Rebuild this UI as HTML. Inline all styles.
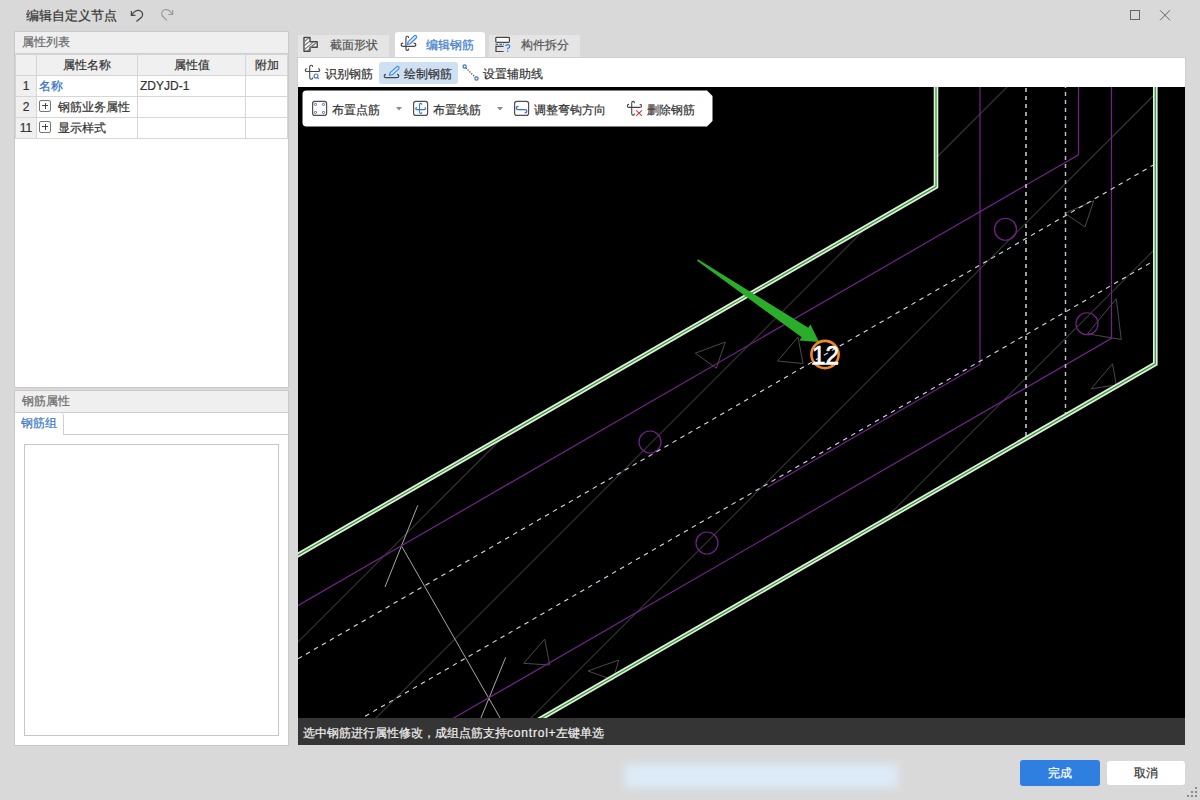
<!DOCTYPE html>
<html><head><meta charset="utf-8">
<style>
*{box-sizing:border-box;margin:0;padding:0}
html,body{width:1200px;height:800px;overflow:hidden;background:#d9d9d9;font-family:"Liberation Sans",sans-serif;font-size:12px;color:#333}
.a{position:absolute}
.t{white-space:nowrap;line-height:1}
.t,table.grid td,.phead{-webkit-text-stroke:0.2px currentColor}
#title{left:26px;top:9px;font-size:13px;color:#333}
/* left panels */
.panel{background:#fff;border:1px solid #c9c9c9}
.phead{background:#efefef;border-bottom:1px solid #cfcfcf;color:#6a6a6a;font-size:12px;padding-left:7px;line-height:21px;height:22px}
table.grid{border-collapse:collapse;position:absolute;left:0;top:22px;width:272px;table-layout:fixed}
table.grid td{border:1px solid #d6d6d6;height:21px;line-height:19px;font-size:12px;color:#333;padding:0 2px;white-space:nowrap;overflow:hidden}
table.grid tr.h td{background:#f0f0f0;text-align:center;color:#333}
table.grid td.n{background:#f0f0f0;text-align:center;padding:0}
.plus{display:inline-block;width:12px;height:12px;border:1px solid #777;border-radius:2px;position:relative;vertical-align:-1px;margin:0 7px 0 0}
.plus:before{content:"";position:absolute;left:2px;top:4.5px;width:6px;height:1px;background:#444}
.plus:after{content:"";position:absolute;left:4.5px;top:2px;width:1px;height:6px;background:#444}
.tab{background:#e5e5e5;color:#555;font-size:12px}
.tb{color:#333;font-size:12px}
</style></head><body>
<div class="a t" id="title">编辑自定义节点</div>
<svg class="a" style="left:125px;top:3px" width="55" height="25" viewBox="125 3 55 25">
<path d="M131.4 11 V15.4 H135.5 M132 14.8 C134 11.5 137 9.8 139.8 10.6 C142.5 11.5 143.4 14.6 141.8 17 L136.4 21.6" fill="none" stroke="#4a4a4a" stroke-width="1.3"/>
<path d="M172.7 10.1 V14.5 H168.3 M172.2 14 C170.2 10.5 167.5 8.9 164.6 9.8 C161.6 10.8 160.9 14 162.6 16.3 L167 20.4" fill="none" stroke="#9a9a9a" stroke-width="1.2"/>
</svg>
<div class="a" style="left:1130px;top:10px;width:10px;height:10px;border:1px solid #666"></div>
<svg class="a" style="left:1159px;top:9px" width="12" height="12" viewBox="0 0 12 12"><path d="M1 1.2 L11 11.3 M11 1.2 L1 11.3" stroke="#666" stroke-width="1"/></svg>

<!-- left panel 1 -->
<div class="a panel" style="left:14px;top:31px;width:275px;height:357px">
  <div class="phead">属性列表</div>
  <table class="grid">
    <colgroup><col style="width:21px"><col style="width:101px"><col style="width:108px"><col style="width:42px"></colgroup>
    <tr class="h"><td></td><td>属性名称</td><td>属性值</td><td>附加</td></tr>
    <tr><td class="n">1</td><td style="color:#2f6fc6">名称</td><td>ZDYJD-1</td><td></td></tr>
    <tr><td class="n">2</td><td><span class="plus"></span>钢筋业务属性</td><td></td><td></td></tr>
    <tr><td class="n">11</td><td><span class="plus"></span>显示样式</td><td></td><td></td></tr>
  </table>
</div>
<!-- left panel 2 -->
<div class="a panel" style="left:14px;top:390px;width:275px;height:356px">
  <div class="phead">钢筋属性</div>
  <div class="a" style="left:0;top:43px;width:273px;height:1px;background:#cfcfcf"></div>
  <div class="a t" style="left:0;top:22px;width:49px;height:22px;background:#fff;border-right:1px solid #cfcfcf;border-radius:0 3px 0 0;color:#3a78c3;font-size:12px;line-height:21px;padding-left:6px">钢筋组</div>
  <div class="a" style="left:9px;top:53px;width:255px;height:292px;border:1px solid #c6c6c6"></div>
</div>

<!-- right tabs -->
<div class="a tab t" style="left:298px;top:35px;width:91px;height:22px;line-height:21px;padding-left:32px">截面形状</div>
<div class="a t" style="left:395px;top:32px;width:90px;height:25px;background:#fff;border-radius:3px 3px 0 0;color:#3b7bc8;line-height:26px;padding-left:31px">编辑钢筋</div>
<div class="a tab t" style="left:489px;top:35px;width:91px;height:22px;line-height:21px;padding-left:32px">构件拆分</div>

<!-- toolbar -->
<div class="a" style="left:297px;top:57px;width:889px;height:31px;background:#fff;border:1px solid #cfcfcf;border-bottom:none"></div>
<div class="a" style="left:379px;top:62px;width:79px;height:22px;background:#cfe0f3;border-radius:3px"></div>
<div class="a t tb" style="left:325px;top:68px">识别钢筋</div>
<div class="a t tb" style="left:404px;top:68px">绘制钢筋</div>
<div class="a t tb" style="left:483px;top:68px">设置辅助线</div>

<!-- canvas -->
<div class="a" id="canvas" style="left:298px;top:87px;width:887px;height:631px;background:#000;overflow:hidden">
<!--SVG-->
<svg width="887" height="631" viewBox="298 87 887 631" style="position:absolute;left:0;top:0">
<line x1="290.0" y1="650.0" x2="504.0" y2="436.0" stroke="#383838" stroke-width="1.1" />
<line x1="364.0" y1="730.0" x2="868.3" y2="225.7" stroke="#383838" stroke-width="1.1" />
<line x1="936.0" y1="158.0" x2="1014.0" y2="80.0" stroke="#383838" stroke-width="1.1" />
<line x1="519.0" y1="730.0" x2="1155.0" y2="94.0" stroke="#383838" stroke-width="1.1" />
<line x1="883.0" y1="521.0" x2="1155.0" y2="249.0" stroke="#383838" stroke-width="1.1" />
<line x1="417.8" y1="505.3" x2="385.0" y2="586.9" stroke="#a8a8a8" stroke-width="1" />
<line x1="401.9" y1="546.6" x2="507.0" y2="730.0" stroke="#a8a8a8" stroke-width="1" />
<line x1="505.7" y1="657.3" x2="478.0" y2="725.0" stroke="#a8a8a8" stroke-width="1" />
<polygon points="1065,213.25 1093.75,200.75 1085,227" fill="none" stroke="#4a4a4a" stroke-width="1"/>
<polygon points="1116.25,298.75 1121.25,339.5 1087.5,333.75" fill="none" stroke="#4a4a4a" stroke-width="1"/>
<polygon points="1112.5,363.75 1116.25,385 1091.25,388.75" fill="none" stroke="#4a4a4a" stroke-width="1"/>
<polygon points="695.3,353.2 725.3,342 716.25,368.2" fill="none" stroke="#4a4a4a" stroke-width="1"/>
<polygon points="777.5,361 798,337 803,363.5" fill="none" stroke="#4a4a4a" stroke-width="1"/>
<polygon points="523.7,663.3 544.7,639 549.7,665" fill="none" stroke="#4a4a4a" stroke-width="1"/>
<polygon points="588,671 618.7,660 613,680" fill="none" stroke="#4a4a4a" stroke-width="1"/>
<polyline points="1078.5,80.0 1078.5,154.8 290.0,610.1" fill="none" stroke="#72228a" stroke-width="1.2" />
<polyline points="980.0,80.0 980.0,364.5 767.5,487.2" fill="none" stroke="#72228a" stroke-width="1.2" />
<polyline points="1111.5,80.0 1111.5,338.3 433.0,730.0" fill="none" stroke="#72228a" stroke-width="1.2" />
<circle cx="1005.5" cy="229.25" r="11" fill="none" stroke="#72228a" stroke-width="1.2"/>
<circle cx="1087" cy="323.75" r="11" fill="none" stroke="#72228a" stroke-width="1.2"/>
<circle cx="650" cy="442" r="11" fill="none" stroke="#72228a" stroke-width="1.2"/>
<circle cx="707" cy="543" r="11" fill="none" stroke="#72228a" stroke-width="1.2"/>
<line x1="290.0" y1="663.4" x2="1155.0" y2="164.0" stroke="#d4dae6" stroke-width="1.1" stroke-dasharray="4.6 4.6"/>
<line x1="341.2" y1="730.0" x2="1155.0" y2="260.2" stroke="#d4dae6" stroke-width="1.1" stroke-dasharray="4.6 4.6"/>
<line x1="1026.0" y1="80.0" x2="1026.0" y2="438.4" stroke="#b8bcc4" stroke-width="1.7" stroke-dasharray="4 4"/>
<line x1="1065.5" y1="84.0" x2="1065.5" y2="415.6" stroke="#b8bcc4" stroke-width="1.5" stroke-dasharray="4 4"/>
<polyline points="936.0,80.0 936.0,186.6 290.0,559.6" fill="none" stroke="#dcf3d8" stroke-width="4.6" stroke-linejoin="miter"/>
<polyline points="936.0,80.0 936.0,186.6 290.0,559.6" fill="none" stroke="#3f8f3f" stroke-width="1.2" stroke-linejoin="miter"/>
<polyline points="1155.3,80.0 1155.3,363.8 521.0,730.0" fill="none" stroke="#dcf3d8" stroke-width="4.6" stroke-linejoin="miter"/>
<polyline points="1155.3,80.0 1155.3,363.8 521.0,730.0" fill="none" stroke="#3f8f3f" stroke-width="1.2" stroke-linejoin="miter"/>
<polygon points="697.1,260.7 801.7,337.3 799.4,340.6 819.0,342.0 810.4,324.4 808.2,327.7 697.9,259.3" fill="#2aae2a"/>
<circle cx="825" cy="354.5" r="13.6" fill="none" stroke="#f08a22" stroke-width="2.6"/>
<text x="825.5" y="364.4" text-anchor="middle" font-family="Liberation Sans" font-size="26.5" fill="#fff" stroke="#fff" stroke-width="0.6" textLength="27" lengthAdjust="spacingAndGlyphs">12</text>
<line x1="812" y1="364" x2="838" y2="364" stroke="#fff" stroke-width="1.5"/>
</svg>
<!--/SVG-->
</div>

<!-- floating toolbar -->
<svg class="a" style="left:302px;top:90px" width="411" height="37" viewBox="0 0 411 37"><path d="M4.5 0.5 H405 L410.5 6 V31 L405 36.5 H4.5 Q0.5 36.5 0.5 32.5 V4.5 Q0.5 0.5 4.5 0.5 Z" fill="#fff"/></svg>
<div class="a t tb" style="left:332px;top:104px">布置点筋</div>
<div class="a t tb" style="left:433px;top:104px">布置线筋</div>
<div class="a t tb" style="left:534px;top:104px">调整弯钩方向</div>
<div class="a t tb" style="left:647px;top:104px">删除钢筋</div>
<svg class="a" style="left:396px;top:107px" width="7" height="4"><path d="M0 0H6L3 3.5Z" fill="#8a8a8a"/></svg>
<svg class="a" style="left:497px;top:107px" width="7" height="4"><path d="M0 0H6L3 3.5Z" fill="#8a8a8a"/></svg>

<!-- icons -->
<svg class="a" style="left:298px;top:30px" width="30" height="30" viewBox="298 30 30 30">
<path d="M304 37.5 H310 V41.8 H317.2 V47.2 H310 V51.2 H304 Z" fill="#fff" stroke="#474747" stroke-width="1.4" stroke-linejoin="round"/>
<path d="M304.5 41.5 L309 37.8 M304.5 45.5 L310 41 M304.5 49.5 L313 42.3 M307 50.8 L316.5 42.5 M310.5 47 L317 42.2" stroke="#777" stroke-width="1.1"/>
</svg>
<svg class="a" style="left:395px;top:30px" width="30" height="30" viewBox="395 30 30 30">
<path d="M408.7 38.1 Q408.7 36.2 407.3 36.2 Q405.9 36.2 405.9 38.1 V48.4 Q405.9 50.4 407.3 50.4 Q408.7 50.4 408.7 48.4 M403.3 43.1 Q401.2 43.1 401.2 44.7 Q401.2 46.3 403.3 46.3 H413.6 Q415.8 46.3 415.8 44.7 Q415.8 43.1 413.6 43.1" fill="none" stroke="#454545" stroke-width="1.15"/>
<path d="M407.4 44.4 L408.16 41.58 L414.2 35.82 Q415.25 34.9 416.3 35.9 Q417.2 36.9 416.3 37.98 L410.24 43.75 Z" fill="#d6e8fc" stroke="#3d86d8" stroke-width="1.1" stroke-linejoin="round"/>
</svg>
<svg class="a" style="left:488px;top:30px" width="30" height="30" viewBox="488 30 30 30">
<rect x="495.8" y="37.3" width="13.6" height="5" rx="0.8" fill="#fff" stroke="#454545" stroke-width="1.2"/>
<path d="M495.5 44.4 H498 M499.5 44.4 H502 M503 44.4 H503.8" stroke="#3d6fb0" stroke-width="1.1"/>
<path d="M503.6 46.4 H496 V51.5 H503.6" fill="none" stroke="#454545" stroke-width="1.2"/>
<path d="M505.8 46.2 Q506 44.6 507.8 44.6 Q509.7 44.6 509.7 46.3 Q509.7 47.5 508.3 48.1 Q507.6 48.5 507.6 49.6" fill="none" stroke="#3b82d6" stroke-width="1.3"/>
<circle cx="507.6" cy="51.3" r="0.75" fill="#3b82d6"/>
</svg>
<svg class="a" style="left:300px;top:60px" width="25" height="25" viewBox="300 60 25 25">
<path d="M312.7 67 Q312.7 65.3 311.2 65.3 Q309.7 65.3 309.7 67 V77.6 Q309.7 79.3 311.2 79.3 Q312.7 79.3 312.7 77.6 M307.2 68.8 Q305.2 68.8 305.2 70.2 Q305.2 71.5 307.2 71.5 H318 Q319.8 71.5 319.8 70.2 Q319.8 68.8 318 68.8" fill="none" stroke="#454545" stroke-width="1.1"/>
<circle cx="316" cy="76" r="2" fill="none" stroke="#3e73b8" stroke-width="1.1"/>
<path d="M317.3 77.3 L318.8 78.8" stroke="#3e73b8" stroke-width="1.1"/>
</svg>
<svg class="a" style="left:380px;top:62px" width="22" height="22" viewBox="380 62 22 22">
<path d="M386 74.33 Q384.17 74.33 384.17 76 Q384.17 77.67 386 77.67 H397 Q398.83 77.67 398.83 76 Q398.83 74.33 397 74.33" fill="none" stroke="#454545" stroke-width="1.15"/>
<path d="M389.33 75.33 L390.2 72.55 L396.68 66.87 Q397.7 66 398.66 66.9 Q399.5 68 398.66 69.13 L392.2 74.8 Z" fill="#d6e8fc" stroke="#3d86d8" stroke-width="1.1" stroke-linejoin="round"/>
</svg>
<svg class="a" style="left:460px;top:62px" width="22" height="22" viewBox="460 62 22 22">
<path d="M465.8 67.8 L475.2 77.2" stroke="#444" stroke-width="1.2" stroke-dasharray="1.3 1.3"/>
<circle cx="464.6" cy="66.5" r="1.6" fill="#fff" stroke="#3d73c0" stroke-width="1.2"/>
<circle cx="476.5" cy="78.5" r="1.6" fill="#fff" stroke="#3d73c0" stroke-width="1.2"/>
</svg>
<svg class="a" style="left:308px;top:96px" width="130" height="24" viewBox="308 96 130 24">
<rect x="312.6" y="101.4" width="14" height="14" rx="2.2" fill="none" stroke="#4f4f4f" stroke-width="1.2"/>
<circle cx="315.5" cy="104.4" r="1.1" fill="none" stroke="#5b68a8" stroke-width="1"/>
<circle cx="323.5" cy="104.4" r="1.1" fill="none" stroke="#5b68a8" stroke-width="1"/>
<circle cx="315.5" cy="112.4" r="1.1" fill="none" stroke="#5b68a8" stroke-width="1"/>
<circle cx="323.5" cy="112.4" r="1.1" fill="none" stroke="#5b68a8" stroke-width="1"/>
<rect x="413.6" y="101.4" width="14" height="14" rx="2.2" fill="none" stroke="#4f4f4f" stroke-width="1.2"/>
<path d="M421.8 104.8 Q421.8 103.4 420.6 103.4 Q419.5 103.4 419.5 104.8 V112 Q419.5 113.5 420.7 113.5 Q421.8 113.5 421.8 112.2 M417 107.6 Q415.7 107.6 415.7 108.6 Q415.7 109.6 417 109.6 H424.3 Q425.6 109.6 425.6 108.6 Q425.6 107.6 424.6 107.6" fill="none" stroke="#3a78c8" stroke-width="1.1"/>
</svg>
<svg class="a" style="left:510px;top:96px" width="140" height="24" viewBox="510 96 140 24">
<rect x="514.6" y="101.4" width="14" height="14" rx="2.2" fill="none" stroke="#4f4f4f" stroke-width="1.2"/>
<path d="M518.6 106.4 Q516.2 106.4 516.2 108 Q516.2 109.7 518 109.7 H524.8 Q526.8 109.7 526.8 111.2 Q526.8 112.8 524.6 112.8" fill="none" stroke="#3a6cb8" stroke-width="1.2"/>
<path d="M634.5 103.2 Q634.5 101.4 633.1 101.4 Q631.7 101.4 631.7 103.2 V113.4 Q631.7 115.1 633.1 115.1 Q634.5 115.1 634.5 113.4 M629 104.4 Q627.3 104.4 627.3 105.9 Q627.3 107.4 629 107.4 H639.7 Q641.6 107.4 641.6 105.9 Q641.6 104.4 639.7 104.4" fill="none" stroke="#454545" stroke-width="1.1"/>
<path d="M636.2 110.4 L641.9 115.8 M641.9 110.4 L636.2 115.8" stroke="#d03a46" stroke-width="1.1"/>
</svg>

<!-- status bar -->
<div class="a t" style="left:298px;top:718px;width:887px;height:27px;background:#353535;color:#f0f0f0;font-size:12px;line-height:30px;padding-left:5px">选中钢筋进行属性修改，成组点筋支持<span style="letter-spacing:0.8px">control+</span>左键单选</div>

<div class="a" style="left:625px;top:764px;width:273px;height:24px;background:#dcebf8;filter:blur(5px)"></div>
<svg class="a" style="left:1187px;top:786px" width="12" height="12"><g fill="#8a8a8a"><rect x="8" y="1" width="2" height="2"/><rect x="4" y="5" width="2" height="2"/><rect x="8" y="5" width="2" height="2"/><rect x="0" y="9" width="2" height="2"/><rect x="4" y="9" width="2" height="2"/><rect x="8" y="9" width="2" height="2"/></g></svg>
<!-- buttons -->
<div class="a t" style="left:1020px;top:760px;width:80px;height:26px;background:#2f7fe0;border-radius:3px;color:#fff;font-size:12px;line-height:27px;text-align:center">完成</div>
<div class="a t" style="left:1107px;top:761px;width:78px;height:24px;background:#fff;border-radius:3px;color:#333;font-size:12px;line-height:25px;text-align:center">取消</div>
</body></html>
